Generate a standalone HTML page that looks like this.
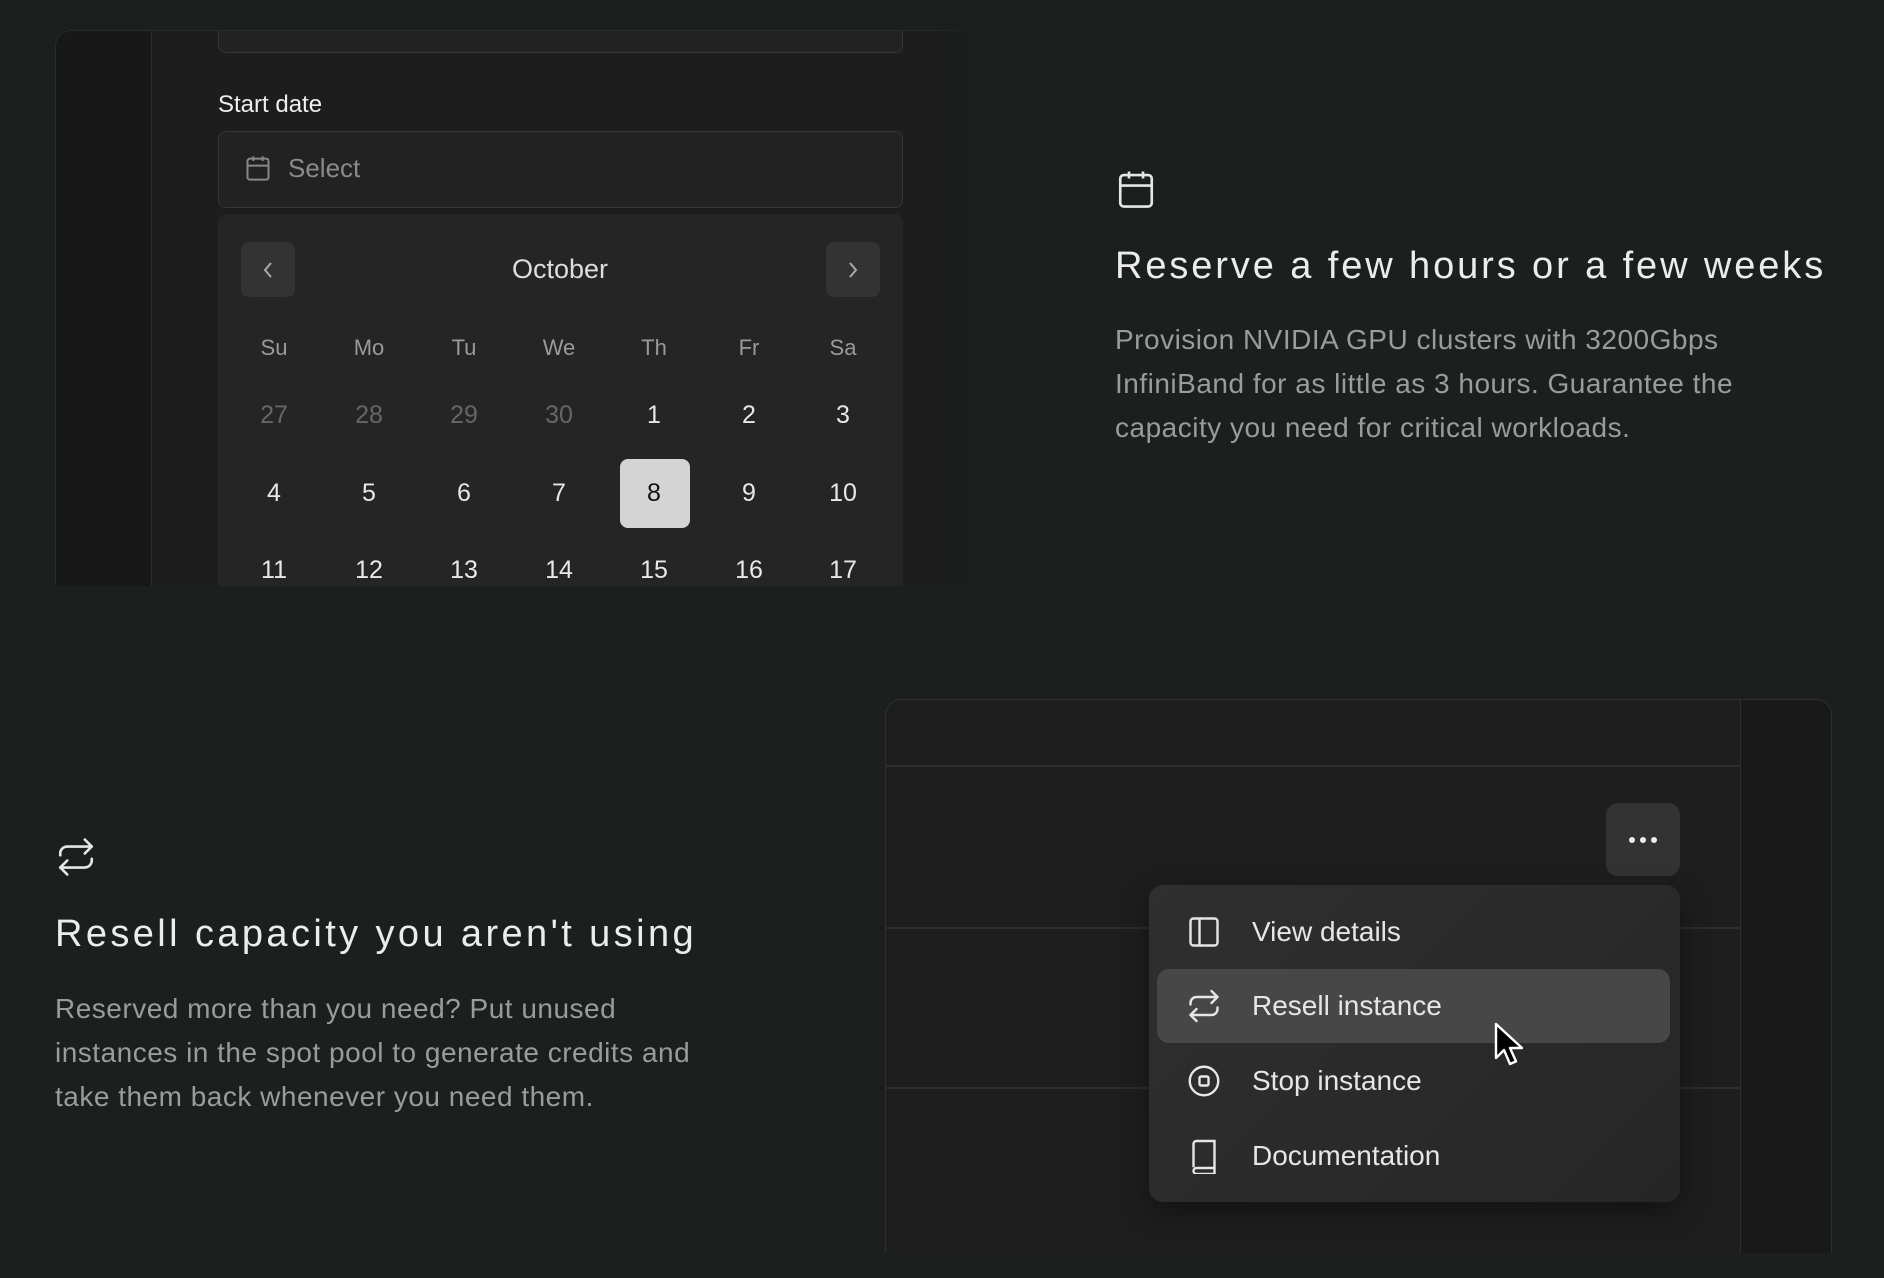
<!DOCTYPE html>
<html><head><meta charset="utf-8"><style>
*{margin:0;padding:0;box-sizing:border-box}
body{width:1884px;height:1278px;background:#1b201e;font-family:"Liberation Sans",sans-serif;position:relative;overflow:hidden;color:#e8e8e8}
.abs{position:absolute}
.card1{left:55px;top:30px;width:952px;height:556px;background:#1d1d1d;border-radius:16px 16px 0 0;border:1px solid #2a2a2a;border-bottom:none;overflow:hidden;-webkit-mask-image:linear-gradient(90deg,#000 90%,transparent)}
.side{left:0;top:0;width:96px;height:100%;background:#181818;border-right:1px solid #2c2c2c}
.inp{border:1.5px solid #363636;border-radius:8px;background:#222}
.cal{left:162px;top:183px;width:685px;height:380px;background:#252525;border-radius:8px 8px 0 0}
.nav{width:54px;height:55px;background:#333;border-radius:8px;top:28px;display:flex;align-items:center;justify-content:center}
.d{position:absolute;width:70px;text-align:center;font-size:25px;transform:translateX(-35px)}
.wd{color:#9a9a9a;font-size:22px}
.g{color:#666}
h2{font-weight:normal;font-size:38px;color:#ececec;position:absolute;white-space:nowrap}
p.t{position:absolute;font-size:28px;line-height:44px;color:#9b9b9b;letter-spacing:0.5px}
.card2{left:885px;top:699px;width:947px;height:554px;background:#1e1e1e;border-radius:16px 16px 0 0;border:1px solid #2f2f2f;border-bottom:none;overflow:hidden}
.hl{position:absolute;left:0;width:854px;height:2px;background:#2d2d2d}
.menu{left:1149px;top:885px;width:531px;height:317px;border-radius:14px;background:linear-gradient(135deg,#2f2f2f,#262626);box-shadow:0 10px 30px rgba(0,0,0,.4)}
.it{position:absolute;left:0;width:100%;height:74px;display:flex;align-items:center;font-size:28px;color:#e6e6e6}
.it svg{margin-left:37px;margin-right:30px}
</style></head><body>
<div class="abs card1">
 <div class="abs side"></div>
 <div class="abs inp" style="left:162px;top:-20px;width:685px;height:42px"></div>
 <div class="abs" style="left:162px;top:60px;font-size:24px;color:#eee">Start date</div>
 <div class="abs inp" style="left:162px;top:100px;width:685px;height:77px"></div>
 <svg class="abs" style="left:188px;top:122px" width="28" height="30" viewBox="0 0 24 24" fill="none" stroke="#888" stroke-width="1.7"><rect x="3" y="4" width="18" height="18" rx="2"/><path d="M3 10h18M8 2v4M16 2v4"/></svg>
 <div class="abs" style="left:232px;top:122px;font-size:26px;color:#8a8a8a">Select</div>
 <div class="abs cal">
  <div class="abs nav" style="left:23px"><svg width="14" height="20" viewBox="0 0 14 20" fill="none" stroke="#aaa" stroke-width="2"><path d="M10 3L4 10l6 7"/></svg></div>
  <div class="abs nav" style="left:608px"><svg width="14" height="20" viewBox="0 0 14 20" fill="none" stroke="#aaa" stroke-width="2"><path d="M4 3l6 7-6 7"/></svg></div>
  <div class="d" style="left:342px;top:40px;width:200px;transform:translateX(-100px);font-size:27px;color:#ddd">October</div>
  <div class="abs" style="left:402px;top:245px;width:70px;height:69px;background:#d4d4d4;border-radius:8px"></div>
 </div>
</div>
<svg class="abs" style="left:1115px;top:167px" width="42" height="44" viewBox="0 0 24 24" fill="none" stroke="#e6e6e6" stroke-width="1.5"><rect x="3" y="4" width="18" height="18" rx="2"/><path d="M3 10h18M8 2v4M16 2v4"/></svg>
<h2 style="left:1115px;top:245px;letter-spacing:2.9px">Reserve a few hours or a few weeks</h2>
<p class="t" style="left:1115px;top:318px;width:690px">Provision NVIDIA GPU clusters with 3200Gbps InfiniBand for as little as 3 hours. Guarantee the capacity you need for critical workloads.</p>
<svg class="abs" style="left:55px;top:836px" width="42" height="42" viewBox="0 0 24 24" fill="none" stroke="#e6e6e6" stroke-width="1.5" stroke-linecap="round" stroke-linejoin="round"><path d="M17 2l4 4-4 4"/><path d="M3 11v-1a4 4 0 0 1 4-4h14"/><path d="M7 22l-4-4 4-4"/><path d="M21 13v1a4 4 0 0 1-4 4H3"/></svg>
<h2 style="left:55px;top:913px;letter-spacing:3.4px">Resell capacity you aren't using</h2>
<p class="t" style="left:55px;top:987px;width:665px">Reserved more than you need? Put unused instances in the spot pool to generate credits and take them back whenever you need them.</p>
<div class="abs card2">
 <div class="abs" style="left:854px;top:0;width:93px;height:100%;background:#191919;border-left:1px solid #2f2f2f"></div>
 <div class="hl" style="top:65px"></div>
 <div class="hl" style="top:227px"></div>
 <div class="hl" style="top:387px"></div>
</div>
<div class="abs" style="left:1606px;top:803px;width:74px;height:73px;background:#333;border-radius:12px;display:flex;align-items:center;justify-content:center;gap:5px">
 <i style="width:6px;height:6px;border-radius:3px;background:#eee"></i><i style="width:6px;height:6px;border-radius:3px;background:#eee"></i><i style="width:6px;height:6px;border-radius:3px;background:#eee"></i>
</div>
<div class="abs menu">
 <div class="abs" style="left:8px;top:84px;width:513px;height:74px;background:#474747;border-radius:12px"></div>
 <div class="it" style="top:10px"><svg width="36" height="36" viewBox="0 0 24 24" fill="none" stroke="#e6e6e6" stroke-width="1.6"><rect x="3" y="3" width="18" height="18" rx="2"/><path d="M9 3v18"/></svg>View details</div>
 <div class="it" style="top:84px"><svg width="36" height="36" viewBox="0 0 24 24" fill="none" stroke="#e6e6e6" stroke-width="1.6" stroke-linecap="round" stroke-linejoin="round"><path d="M17 2l4 4-4 4"/><path d="M3 11v-1a4 4 0 0 1 4-4h14"/><path d="M7 22l-4-4 4-4"/><path d="M21 13v1a4 4 0 0 1-4 4H3"/></svg>Resell instance</div>
 <div class="it" style="top:159px"><svg width="36" height="36" viewBox="0 0 24 24" fill="none" stroke="#e6e6e6" stroke-width="1.6"><circle cx="12" cy="12" r="9.5"/><rect x="9" y="9" width="6" height="6" rx="1"/></svg>Stop instance</div>
 <div class="it" style="top:234px"><svg width="36" height="36" viewBox="0 0 24 24" fill="none" stroke="#e6e6e6" stroke-width="1.6"><path d="M5 19.5V4a2 2 0 0 1 2-2h12v18H7a2 2 0 0 0 0 4h12v-4"/></svg>Documentation</div>
</div>
<svg class="abs" style="left:1494px;top:1022px" width="32" height="46" viewBox="0 0 16 23"><path d="M1 1v17l4-4 3 7 3-1.3-3-6.7h6z" fill="#000" stroke="#fff" stroke-width="1.2" stroke-linejoin="round"/></svg>
<div class="abs" style="left:217px;top:213px;width:685px;height:373px;pointer-events:none">
 <div class="d wd" style="left:57px;top:122px">Su</div><div class="d wd" style="left:152px;top:122px">Mo</div><div class="d wd" style="left:247px;top:122px">Tu</div><div class="d wd" style="left:342px;top:122px">We</div><div class="d wd" style="left:437px;top:122px">Th</div><div class="d wd" style="left:532px;top:122px">Fr</div><div class="d wd" style="left:626px;top:122px">Sa</div>
 <div class="d g" style="left:57px;top:188px">27</div><div class="d g" style="left:152px;top:188px">28</div><div class="d g" style="left:247px;top:188px">29</div><div class="d g" style="left:342px;top:188px">30</div><div class="d" style="left:437px;top:188px">1</div><div class="d" style="left:532px;top:188px">2</div><div class="d" style="left:626px;top:188px">3</div>
 <div class="d" style="left:57px;top:266px">4</div><div class="d" style="left:152px;top:266px">5</div><div class="d" style="left:247px;top:266px">6</div><div class="d" style="left:342px;top:266px">7</div><div class="d" style="left:437px;top:266px;color:#111">8</div><div class="d" style="left:532px;top:266px">9</div><div class="d" style="left:626px;top:266px">10</div>
 <div class="d" style="left:57px;top:343px">11</div><div class="d" style="left:152px;top:343px">12</div><div class="d" style="left:247px;top:343px">13</div><div class="d" style="left:342px;top:343px">14</div><div class="d" style="left:437px;top:343px">15</div><div class="d" style="left:532px;top:343px">16</div><div class="d" style="left:626px;top:343px">17</div>
</div>
<div class="abs" style="left:0;top:586px;width:1884px;height:40px;background:#1b201e"></div>
</body></html>
